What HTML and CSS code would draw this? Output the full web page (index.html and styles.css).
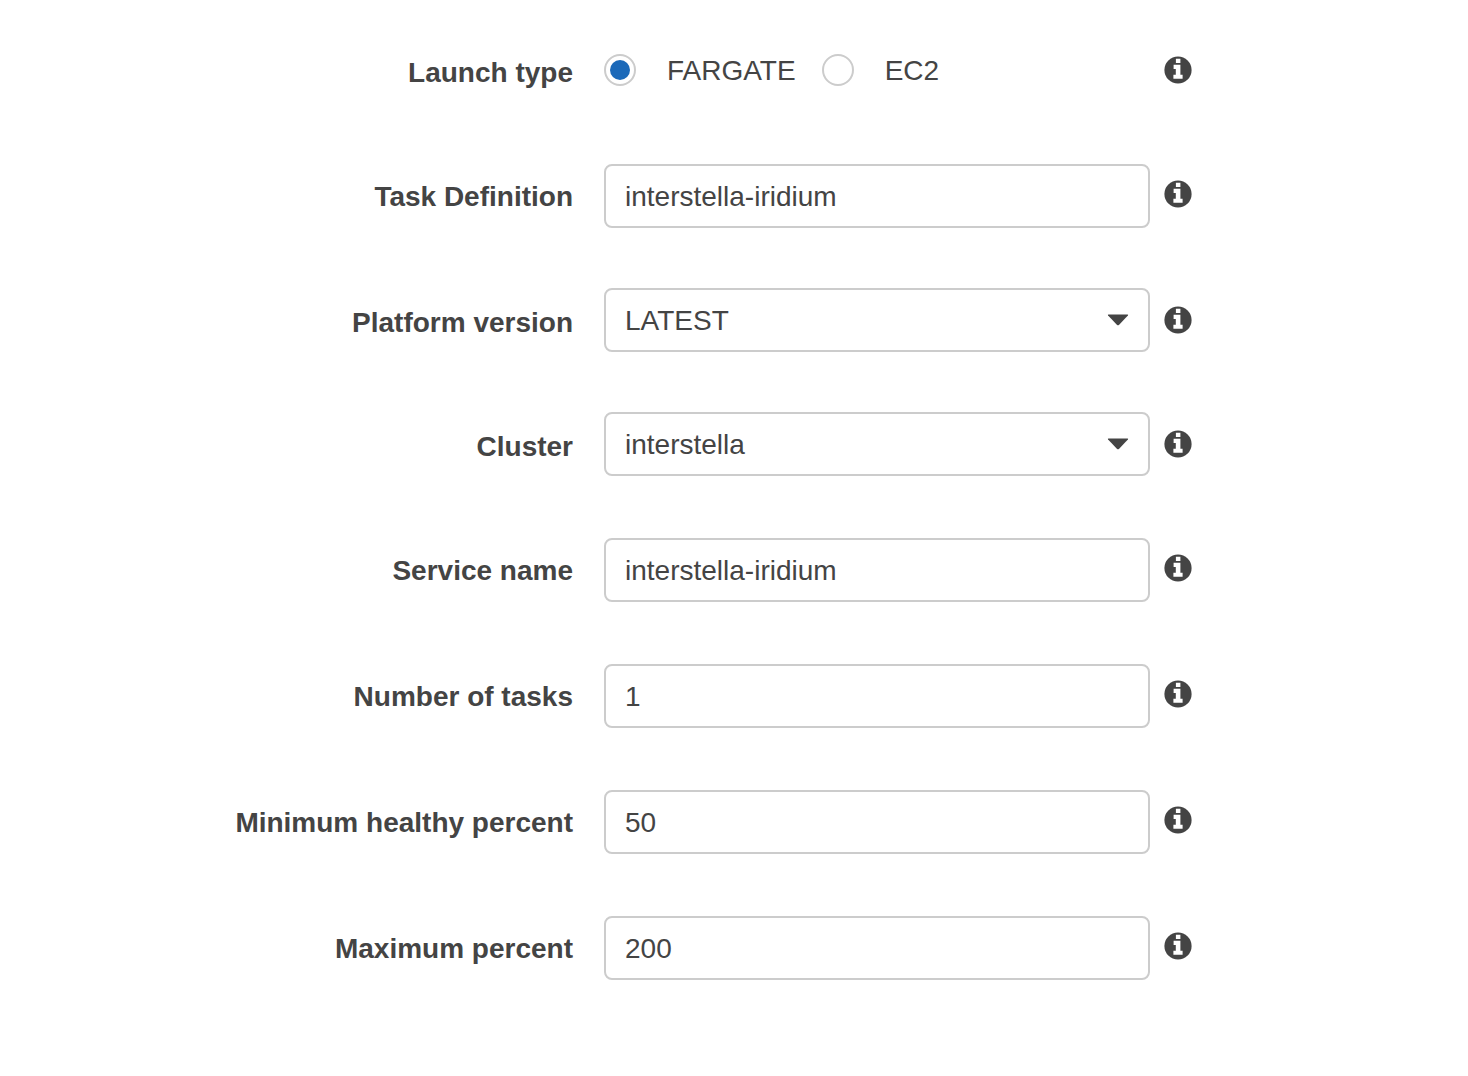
FILE: index.html
```html
<!DOCTYPE html>
<html lang="en">
<head>
<meta charset="utf-8">
<meta name="viewport" content="width=device-width, initial-scale=1">
<title>Configure service</title>
<link rel="stylesheet" href="styles.css">
</head>
<body>
<svg class="sprite" aria-hidden="true">
  <symbol id="info" viewBox="0 0 28 28">
    <circle cx="14" cy="14" r="13.6"/>
    <path fill="#fff" d="M11.9 2.8h4.500v4.100h-4.500zM9.600 8.800h6.800v9.900h2.200v4.100H9.400v-4.100h2.400v-5.800H9.600z"/>
  </symbol>
</svg>
<form class="form">
  <div class="field field--choice" role="radiogroup" aria-labelledby="launch-label">
    <span class="field__label" id="launch-label">Launch type</span>
    <div class="choices">
      <label class="choice"><input class="choice__radio" type="radio" name="launch" checked><span class="choice__text">FARGATE</span></label>
      <label class="choice"><input class="choice__radio" type="radio" name="launch"><span class="choice__text">EC2</span></label>
    </div>
    <button class="info" type="button" aria-label="About launch type"><svg class="info__icon"><use href="#info"/></svg></button>
  </div>
  <div class="field">
    <label class="field__label" for="task">Task Definition</label>
    <input class="control" id="task" type="text" value="interstella-iridium" spellcheck="false">
    <button class="info" type="button" aria-label="About task definition"><svg class="info__icon"><use href="#info"/></svg></button>
  </div>
  <div class="field field--select">
    <label class="field__label" for="platform">Platform version</label>
    <div class="select">
      <select class="control" id="platform"><option>LATEST</option></select>
      <svg class="select__arrow" viewBox="0 0 22 12" aria-hidden="true"><path d="M1.500.5h19q1 .2.400 1.100l-9 9.300q-.9.800-1.800 0L1.100 1.600Q.5.700 1.500.5z"/></svg>
    </div>
    <button class="info" type="button" aria-label="About platform version"><svg class="info__icon"><use href="#info"/></svg></button>
  </div>
  <div class="field field--select">
    <label class="field__label" for="cluster">Cluster</label>
    <div class="select">
      <select class="control" id="cluster"><option>interstella</option></select>
      <svg class="select__arrow" viewBox="0 0 22 12" aria-hidden="true"><path d="M1.500.5h19q1 .2.400 1.100l-9 9.300q-.9.800-1.800 0L1.100 1.600Q.5.700 1.500.5z"/></svg>
    </div>
    <button class="info" type="button" aria-label="About cluster"><svg class="info__icon"><use href="#info"/></svg></button>
  </div>
  <div class="field">
    <label class="field__label" for="service">Service name</label>
    <input class="control" id="service" type="text" value="interstella-iridium" spellcheck="false">
    <button class="info" type="button" aria-label="About service name"><svg class="info__icon"><use href="#info"/></svg></button>
  </div>
  <div class="field">
    <label class="field__label" for="count">Number of tasks</label>
    <input class="control" id="count" type="text" inputmode="numeric" value="1">
    <button class="info" type="button" aria-label="About number of tasks"><svg class="info__icon"><use href="#info"/></svg></button>
  </div>
  <div class="field">
    <label class="field__label" for="minimum">Minimum healthy percent</label>
    <input class="control" id="minimum" type="text" inputmode="numeric" value="50">
    <button class="info" type="button" aria-label="About minimum healthy percent"><svg class="info__icon"><use href="#info"/></svg></button>
  </div>
  <div class="field">
    <label class="field__label" for="maximum">Maximum percent</label>
    <input class="control" id="maximum" type="text" inputmode="numeric" value="200">
    <button class="info" type="button" aria-label="About maximum percent"><svg class="info__icon"><use href="#info"/></svg></button>
  </div>
</form>
</body>
</html>
```

FILE: styles.css
```css
*,
*::before {
  box-sizing: border-box;
}

body {
  margin: 0;
  background: #fff;
  color: #444;
  font: 28px/32px "Liberation Sans", Arial, sans-serif;
}

.sprite {
  display: none;
}

.form {
  padding: 38px 0;
}

.field {
  display: grid;
  grid-template-columns: 604fr 546fr 318fr;
  align-items: center;
  min-height: 64px;
}

.field > * {
  min-width: 0;
}

.field + .field {
  margin-top: 62px;
}

.field + .field--select {
  margin-top: 60px;
}

.field__label {
  padding: 2px 31px 0 0;
  font-weight: bold;
  text-align: right;
}

/* Labels sit slightly low beside drop-downs and radios. */
.field--choice .field__label,
.field--select .field__label {
  padding-top: 6px;
}

.control {
  display: block;
  width: 100%;
  height: 64px;
  margin: 0;
  padding: 2px 19px 0;
  border: 2px solid #ccc;
  border-radius: 8px;
  background: #fff;
  color: inherit;
  font: inherit;
  appearance: none;
}

.select {
  position: relative;
}

.select__arrow {
  position: absolute;
  top: 26px;
  right: 21px;
  width: 22px;
  height: 12px;
  fill: #444;
  pointer-events: none;
}

.choices {
  display: flex;
  gap: 26px;
}

.choice {
  display: flex;
  align-items: center;
  gap: 31px;
}

.choice__text {
  padding-top: 2px;
}

.choice__radio {
  display: grid;
  place-items: center;
  width: 32px;
  height: 32px;
  margin: 0;
  border: 2px solid #ccc;
  border-radius: 50%;
  background: #fff;
  appearance: none;
}

.choice__radio:checked::before {
  content: "";
  width: 20px;
  height: 20px;
  border-radius: 50%;
  background: #1b69b9;
}

.info {
  justify-self: start;
  margin: 0 0 4px 14px;
  padding: 0;
  border: 0;
  background: none;
  color: inherit;
}

.field--choice .info,
.field--select .info {
  margin-bottom: 0;
}

.info__icon {
  display: block;
  width: 28px;
  height: 28px;
  fill: currentColor;
}
```
